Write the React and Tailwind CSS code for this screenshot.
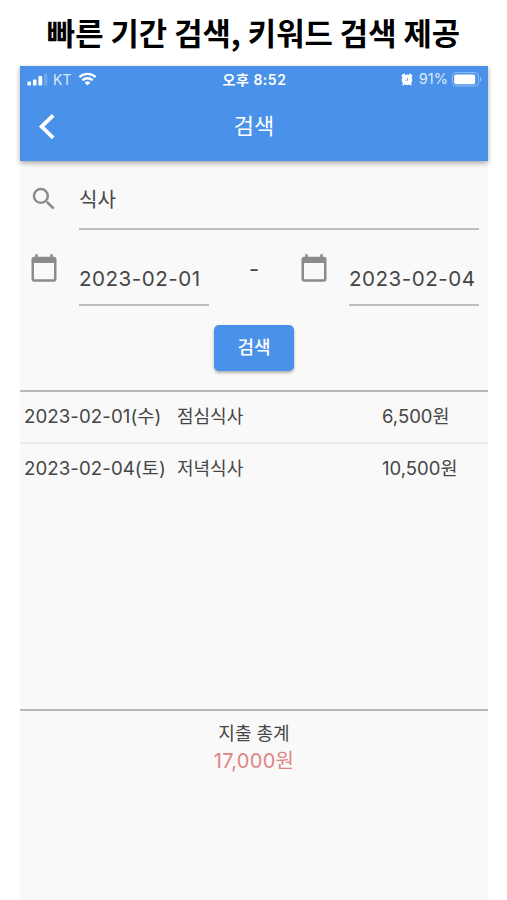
import React from "react";
import { MdCalendarToday, MdSearch } from "react-icons/md";

const rows = [
  { date: "2023-02-01(수)", name: "점심식사", amount: "6,500원" },
  { date: "2023-02-04(토)", name: "저녁식사", amount: "10,500원" },
];

function SignalIcon() {
  return (
    <svg width="21" height="13" viewBox="0 0 21 13" fill="white">
      <rect x="0.4" y="8.6" width="3.6" height="4" rx="1" />
      <rect x="5.9" y="6.4" width="3.6" height="6.2" rx="1" />
      <rect x="11.4" y="3" width="3.8" height="9.6" rx="1" />
      <rect x="17" y="0.4" width="3.4" height="12.2" rx="1" opacity="0.2" />
    </svg>
  );
}

function WifiIcon() {
  return (
    <svg width="19" height="14" viewBox="0 0 18 14" fill="none" stroke="white" strokeWidth="2.4">
      <path d="M0.9 5.2a11.6 11.6 0 0 1 16.2 0" />
      <path d="M3.9 8.3a7.3 7.3 0 0 1 10.2 0" />
      <path d="M9 13.6 6.1 10.6a4.2 4.2 0 0 1 5.8 0z" fill="white" stroke="none" />
    </svg>
  );
}

function AlarmIcon() {
  return (
    <svg width="12" height="13" viewBox="0 0 12 13">
      <circle cx="6" cy="6.7" r="5.3" fill="white" />
      <path d="M1.4 3 3.2 1.4M10.6 3 8.8 1.4M2.6 11l-.4.6M9.4 11l.4.6" stroke="white" strokeWidth="1.8" strokeLinecap="round" />
      <path d="M6.6 4.6v2.6H4.4" stroke="#4a92e9" strokeWidth="0.8" fill="none" />
    </svg>
  );
}

function BatteryIcon() {
  return (
    <svg width="30" height="15" viewBox="0 0 30 15">
      <rect x="0.6" y="0.6" width="26" height="13.4" rx="3.8" fill="none" stroke="white" strokeOpacity="0.4" />
      <rect x="2.2" y="2.4" width="21" height="9.8" rx="2" fill="white" />
      <path d="M28 5.2c1.8.5 1.8 3.7 0 4.2z" fill="white" opacity="0.45" />
    </svg>
  );
}

function DateField({ value }) {
  return (
    <div className="flex">
      <MdCalendarToday className="mt-[4px] size-[30px] shrink-0 text-[#8b8b8b]" />
      <div className="ml-[20px] h-[57px] w-[130px] border-b-2 border-[#bdbdbd] pt-[15px] text-[20.6px] leading-[30px] tracking-[0.5px]">
        {value}
      </div>
    </div>
  );
}

export default function App() {
  return (
    <div className="flex h-[900px] w-[507px] flex-col overflow-hidden whitespace-nowrap bg-white font-['Inter','Noto_Sans_CJK_KR',sans-serif] text-[#454545]">
      <h1 className="h-[66px] shrink-0 pt-[13px] text-center font-['Noto_Sans_CJK_KR',sans-serif] text-[30.8px] leading-[38px] font-bold text-black">
        빠른 기간 검색, 키워드 검색 제공
      </h1>

      <div className="ml-[20px] flex w-[468px] flex-1 flex-col bg-[#f9f9f9]">
        {/* App bar */}
        <header className="h-[95px] shrink-0 bg-[#4a92e9] text-white shadow-[0_2px_5px_rgba(0,0,0,0.35)]">
          <div className="grid h-[26px] grid-cols-3 items-center pr-[6px] pl-[7px] text-[14.5px]">
            <div className="flex items-center">
              <SignalIcon />
              <span className="mr-[7px] ml-[5px] text-[14px] opacity-80">KT</span>
              <WifiIcon />
            </div>
            <div className="text-center text-[14px] font-semibold tracking-[0.5px]">오후 8:52</div>
            <div className="flex items-center justify-end">
              <AlarmIcon />
              <span className="mr-[4px] ml-[6px] opacity-80">91%</span>
              <BatteryIcon />
            </div>
          </div>
          <div className="grid h-[69px] grid-cols-[60px_1fr_60px] items-center">
            <svg className="ml-[18px]" width="18" height="26" viewBox="0 0 18 26" fill="none" stroke="white" strokeWidth="3.8">
              <path d="M15.2 1.4 3.6 12.6l11.6 11.2" />
            </svg>
            <h2 className="pb-[2px] text-center text-[22px] leading-[30px] font-normal">검색</h2>
          </div>
        </header>

        {/* Search form */}
        <section className="h-[231px] shrink-0 border-b-2 border-[#b9b9b9] pl-[9px]">
          <div className="flex pt-[23px]">
            <MdSearch className="size-[30px] text-[#8b8b8b]" />
            <div className="ml-[20px] h-[46px] w-[400px] border-b-2 border-[#bdbdbd] pt-[1px] text-[20px] leading-[30px]">식사</div>
          </div>
          <div className="flex pt-[19px]">
            <DateField value="2023-02-01" />
            <span className="w-[90px] pt-[5px] text-center text-[22px] leading-[30px]">-</span>
            <DateField value="2023-02-04" />
          </div>
          <button className="mt-[19px] ml-[185px] block h-[46px] w-[80px] rounded-[5px] bg-[#4a92e9] pb-[1px] text-[18px] font-medium text-white shadow-[0_2px_3px_rgba(0,0,0,0.3)]">
            검색
          </button>
        </section>

        {/* Results */}
        <section className="h-[319px] shrink-0 border-b-2 border-[#b9b9b9] text-[18px] leading-[50px]">
          {rows.map((row) => (
            <div key={row.date} className="flex h-[52px] border-b-2 border-[#ececec] pl-[4px] last:border-b-0">
              <div className="w-[153px] text-[18.7px] tracking-[0.05px]">{row.date}</div>
              <div className="w-[205px]">{row.name}</div>
              <div className="text-[18.5px] leading-[48px]">{row.amount}</div>
            </div>
          ))}
        </section>

        {/* Total */}
        <section className="pt-[9px] text-center text-[18px] leading-[28px]">
          <div>지출 총계</div>
          <div className="text-[20px] leading-[26px] tracking-[0.3px] text-[#e08585]">17,000원</div>
        </section>
      </div>
    </div>
  );
}
